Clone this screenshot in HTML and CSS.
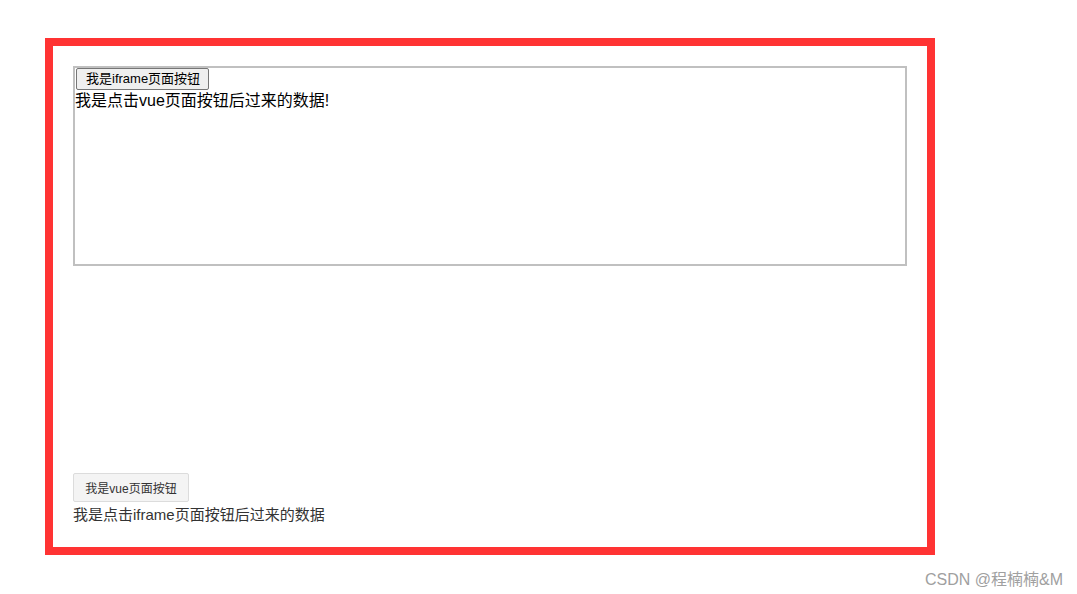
FILE: index.html
```html
<!DOCTYPE html>
<html lang="zh-CN">
<head>
    <meta charset="UTF-8">
    <title>iframe 通信</title>
    <link rel="stylesheet" href="styles.css">
</head>
<body>

    <div class="frame">
        <div class="iframe-box">
            <button class="iframe-btn">我是iframe页面按钮</button>
            <div class="iframe-msg">我是点击vue页面按钮后过来的数据!</div>
        </div>

        <button class="vue-btn">我是vue页面按钮</button>
        <div class="vue-msg">我是点击iframe页面按钮后过来的数据</div>
    </div>

    <div class="watermark">CSDN @程楠楠&amp;M</div>

</body>
</html>
```

FILE: styles.css
```css
* { box-sizing: border-box; margin: 0; padding: 0; }
body { background: #fff; color: #222; font-family: "Liberation Sans", "Noto Sans CJK SC", sans-serif; position: relative; width: 1077px; height: 594px; }
.frame { margin: 38px 0 0 45px; width: 890px; height: 517px; border: 8px solid #ff3333; padding: 20px 20px 0 20px; }
.iframe-box { width: 834px; height: 200px; border: 2px solid #c0c0c0; margin-bottom: 207px; }
.iframe-btn { display: block; font-family: "Liberation Sans", "Noto Sans CJK SC", sans-serif; font-size: 13px; line-height: 16px; height: 22px; padding: 0 8px 0 9px; margin: 0 0 0 1px; color: #000; background: #efefef; border: 1px solid #767676; border-radius: 2px; }
.iframe-msg { font-size: 16px; line-height: 20px; color: #000; margin-top: 1px; }
.vue-btn { display: block; font-family: "Liberation Sans", "Noto Sans CJK SC", sans-serif; font-size: 12px; height: 29px; width: 116px; color: #333; background: #f4f4f4; border: 1px solid #dcdcdc; border-radius: 2px; }
.vue-msg { font-size: 15px; line-height: 20px; color: #333; margin-top: 3px; }
.watermark { position: absolute; right: 14px; top: 566px; font-size: 16px; color: #a0a0a0; }
```
